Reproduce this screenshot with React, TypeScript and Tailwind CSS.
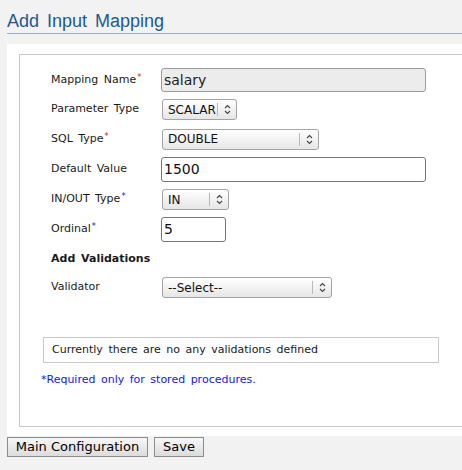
import React from "react";

function Chevrons() {
  return (
    <svg width="7" height="11" viewBox="0 0 7 11" fill="none" stroke="#444" strokeWidth="1.1">
      <path d="M1 4 L3.5 1.5 L6 4" />
      <path d="M1 7 L3.5 9.5 L6 7" />
    </svg>
  );
}

function Select({ value, width }: { value: string; width: string }) {
  return (
    <div
      className={`ml-[1px] flex h-[21px] ${width} items-center rounded-[3px] border border-[#a4a4a4] bg-gradient-to-b from-[#ffffff] to-[#e6e6e6] text-[12px] text-[#111]`}
    >
      <span className="flex-1 pl-[5px]">{value}</span>
      <div className="h-[13px] w-px bg-[#b8b8b8]" />
      <div className="flex w-[18px] items-center justify-center">
        <Chevrons />
      </div>
    </div>
  );
}

function Req({ blue }: { blue?: boolean }) {
  return (
    <span className={`relative -top-[3px] ml-[1px] text-[8px] ${blue ? "text-[#1010ee]" : "text-[#e01010]"}`}>*</span>
  );
}

function Row({ label, h, children }: { label: React.ReactNode; h: string; children?: React.ReactNode }) {
  return (
    <div className={`flex ${h} items-center`}>
      <div className="w-[110px] text-[11px] text-[#1a1a1a] [word-spacing:2px]">{label}</div>
      {children}
    </div>
  );
}

export default function App() {
  return (
    <div className="h-[470px] w-[462px] overflow-hidden bg-[#f2f2f2] font-['DejaVu_Sans',Verdana,sans-serif]">
      <div className="ml-[7px] mt-[11px] border-b border-[#9badc9] pb-[2px]">
        <h1 className="h-[20px] font-['Liberation_Sans',Arial,sans-serif] text-[18px] leading-[20px] text-[#1d5a8f] [word-spacing:3px]">
          Add Input Mapping
        </h1>
      </div>

      <div className="ml-[7px] mt-[10px] w-[480px] bg-white pb-[9px] pl-[12px] pt-[10px]">
        <div className="border border-[#c9c9c9] pb-[39px] pl-[21px] pt-[10px]">
          <div className="ml-[10px]">
            <Row h="h-[30px]" label={<>Mapping Name<Req /></>}>
              <div className="flex h-[24px] w-[265px] items-center rounded-[3px] border border-[#9a9a9a] bg-[#ececec] pl-[2px] text-[14px] text-[#222]">
                salary
              </div>
            </Row>
            <Row h="h-[29px]" label="Parameter Type">
              <Select value="SCALAR" width="w-[75px]" />
            </Row>
            <Row h="h-[30px]" label={<>SQL Type<Req /></>}>
              <Select value="DOUBLE" width="w-[157px]" />
            </Row>
            <Row h="h-[31px]" label="Default Value">
              <div className="flex h-[25px] w-[265px] items-center rounded-[3px] border border-[#777] bg-white pl-[2px] text-[14px] text-[#111]">
                1500
              </div>
            </Row>
            <Row h="h-[29px]" label={<>IN/OUT Type<Req blue /></>}>
              <Select value="IN" width="w-[67px]" />
            </Row>
            <Row h="h-[31px]" label={<>Ordinal<Req blue /></>}>
              <div className="flex h-[25px] w-[65px] items-center rounded-[3px] border border-[#777] bg-white pl-[2px] text-[14px] text-[#111]">
                5
              </div>
            </Row>
            <Row h="h-[28px]" label={<span className="font-bold">Add Validations</span>} />
            <Row h="h-[29px]" label="Validator">
              <Select value="--Select--" width="w-[170px]" />
            </Row>
          </div>

          <div className="ml-[2px] mt-[35px] flex h-[26px] w-[396px] items-center border border-[#c9c9c9] pl-[8px] text-[11px] text-[#1a1a1a] [word-spacing:2px]">
            Currently there are no any validations defined
          </div>

          <div className="mt-[10px] h-[14px] text-[11px] leading-[14px] text-[#1515f0] [word-spacing:2px]">
            *Required only for stored procedures.
          </div>
        </div>
      </div>

      <div className="ml-[7px] mt-[1px] flex gap-[6px]">
        <button className="h-[20px] w-[141px] border border-[#8c8c8c] bg-gradient-to-b from-[#f7f7f7] to-[#dcdcdc] text-[13px] leading-[18px] text-black">
          Main Configuration
        </button>
        <button className="h-[20px] w-[50px] border border-[#8c8c8c] bg-gradient-to-b from-[#f7f7f7] to-[#dcdcdc] text-[13px] leading-[18px] text-black">
          Save
        </button>
      </div>
    </div>
  );
}
